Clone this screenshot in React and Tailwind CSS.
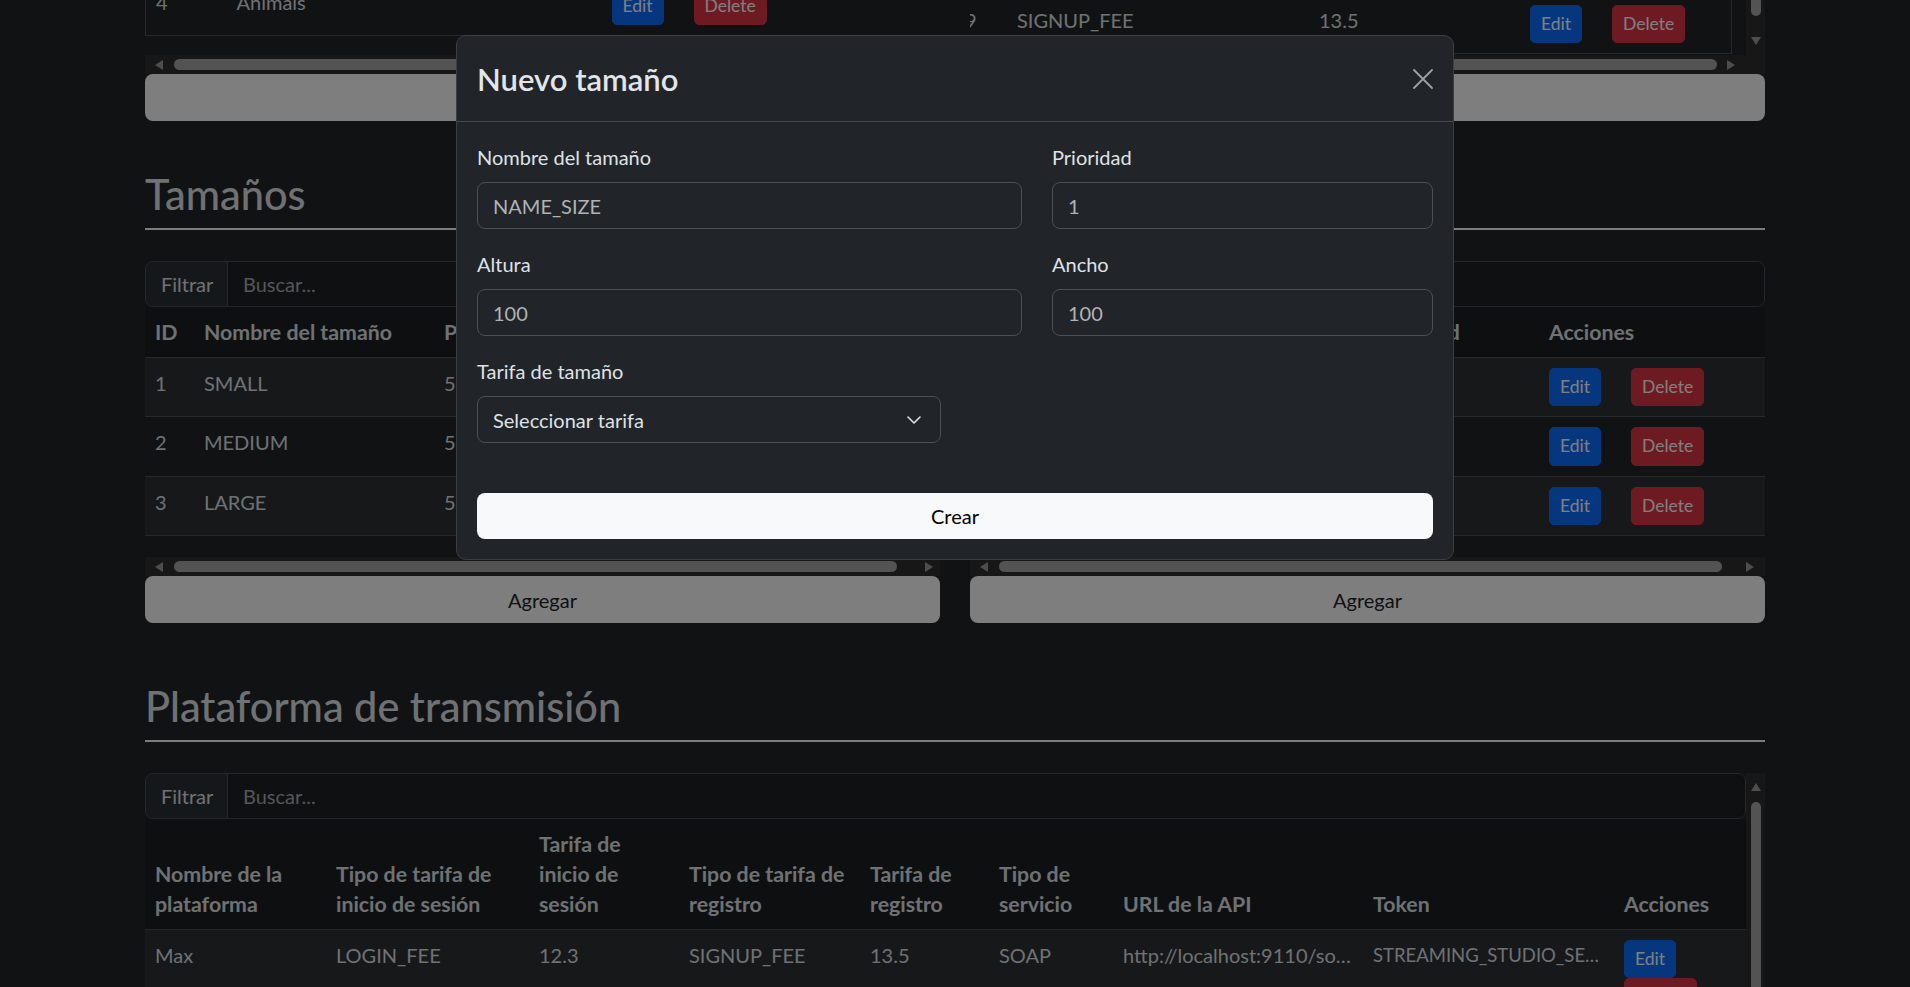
import React from "react";

function Arrow({ dir, className = "" }) {
  const horiz = dir === "left" || dir === "right";
  const pts = {
    left: "8,0 8,10 0,5",
    right: "0,0 8,5 0,10",
    up: "0,8 10,8 5,0",
    down: "0,0 10,0 5,8",
  }[dir];
  return (
    <svg
      width={horiz ? 8 : 10}
      height={horiz ? 10 : 8}
      viewBox={horiz ? "0 0 8 10" : "0 0 10 8"}
      className={`shrink-0 ${className}`}
    >
      <polygon points={pts} fill="#9a9a9a" />
    </svg>
  );
}

function Actions() {
  return (
    <div className="flex flex-wrap">
      <span className="mr-[30px] inline-flex h-[38.25px] items-center rounded-[5px] border border-[#0d6efd] bg-[#0d6efd] px-[10px] text-[17.5px] text-white">
        Edit
      </span>
      <span className="inline-flex h-[38.25px] items-center rounded-[5px] border border-[#dc3545] bg-[#dc3545] px-[10px] text-[17.5px] text-white">
        Delete
      </span>
    </div>
  );
}

function AddButton() {
  return (
    <div className="flex h-[47px] items-center justify-center rounded-[8px] bg-[#fdfdfd] text-[20px] text-[#212529]">
      Agregar
    </div>
  );
}

function FilterBar() {
  return (
    <div className="flex h-[46px] overflow-hidden rounded-[8px] border border-[#495057]">
      <div className="flex w-[82px] items-center border-r border-[#495057] bg-[#2b3035] px-[15px]">Filtrar</div>
      <div className="flex flex-1 items-center bg-[#1e2124] px-[15px] text-[#a9acaf]">Buscar...</div>
    </div>
  );
}

function SectionTitle({ children }) {
  return (
    <h2 className="border-b-2 border-[#f8f9fa] pb-[9px] text-[41.5px] leading-[49px] font-medium">{children}</h2>
  );
}

const th = "px-[10px] py-[10px] text-left align-bottom text-[21.3px] font-bold whitespace-nowrap";
const td = "px-[10px] py-[10px] align-top whitespace-nowrap";

const sizes = [
  { id: 1, name: "SMALL", price: "5.0", prio: 1 },
  { id: 2, name: "MEDIUM", price: "5.5", prio: 2 },
  { id: 3, name: "LARGE", price: "5.8", prio: 3 },
];

const sizeFees = [
  { id: 1, name: "SMALL_FEE", fee: "5.0", prio: 1 },
  { id: 2, name: "MEDIUM_FEE", fee: "5.5", prio: 2 },
  { id: 3, name: "LARGE_FEE", fee: "5.8", prio: 3 },
];

function Field({ label, placeholder }) {
  return (
    <div className="mb-[20px]">
      <label className="mb-[10px] block text-[20px] leading-[30px] text-[#dee2e6]">{label}</label>
      <input
        placeholder={placeholder}
        className="block h-[47px] w-full rounded-[8px] border border-[#495057] bg-[#212529] px-[15px] text-[20px] text-[#dee2e6] outline-none placeholder:text-[#afb3b6]"
      />
    </div>
  );
}

export default function App() {
  return (
    <div className="relative h-screen overflow-hidden bg-[#212529] text-[20px] leading-[30px] text-[#dee2e6] [font-family:Lato,'Liberation_Sans',Arial,sans-serif]">
      <div className="mx-auto w-[1620px]">
        {/* tail of the previous section */}
        <div className="grid grid-cols-2 gap-x-[30px]">
          <div>
            <div className="h-[55px] overflow-hidden">
              <table className="-mt-[23px] w-[795px] table-fixed border-collapse border-l border-[#4d5154]">
                <colgroup>
                  <col className="w-[81px]" />
                  <col className="w-[375px]" />
                  <col className="w-[339px]" />
                </colgroup>
                <tbody>
                  <tr className="border-b border-[#4d5154] bg-[#212529]">
                    <td className={td}>4</td>
                    <td className={td}>Animals</td>
                    <td className={td}><Actions /></td>
                  </tr>
                </tbody>
              </table>
            </div>
            <div className="flex h-[19px] items-center bg-[#2e2e2e]">
              <Arrow dir="left" className="ml-[10px]" />
              <div className="ml-[11px] mr-[28px] h-[11px] flex-1 rounded-full bg-[#a6a6a6]" />
              <Arrow dir="right" className="mr-[7px]" />
            </div>
            <AddButton />
          </div>
          <div>
            <div className="flex h-[55px]">
              <div className="w-[776px] overflow-hidden">
                <table className="-mt-[5px] -ml-[15px] w-[776px] table-fixed border-collapse border-r border-[#4d5154]">
                  <colgroup>
                    <col className="w-[52px]" />
                    <col className="w-[302px]" />
                    <col className="w-[211px]" />
                    <col className="w-[211px]" />
                  </colgroup>
                  <tbody>
                    <tr className="border-b border-[#4d5154] bg-[#212529]">
                      <td className={td}>9</td>
                      <td className={td}>SIGNUP_FEE</td>
                      <td className={td}>13.5</td>
                      <td className={td}><Actions /></td>
                    </tr>
                  </tbody>
                </table>
              </div>
              <div className="flex w-[19px] flex-col items-center bg-[#2e2e2e]">
                <div className="h-[16px] w-[10px] rounded-b-full bg-[#a6a6a6]" />
                <Arrow dir="down" className="mt-[21px]" />
              </div>
            </div>
            <div className="flex h-[19px] items-center bg-[#2e2e2e]">
              <Arrow dir="left" className="ml-[10px]" />
              <div className="ml-[11px] mr-[10px] h-[11px] flex-1 rounded-full bg-[#a6a6a6]" />
              <Arrow dir="right" className="mr-[30px]" />
            </div>
            <AddButton />
          </div>
        </div>

        {/* Tamaños */}
        <div className="mt-[49px] grid grid-cols-2 gap-x-[30px]">
          <div>
            <SectionTitle>Tamaños</SectionTitle>
            <div className="mt-[31px] h-[296px] overflow-hidden">
              <FilterBar />
              <table className="w-[795px] table-fixed border-collapse">
                <colgroup>
                  <col className="w-[49px]" />
                  <col className="w-[240px]" />
                  <col className="w-[140px]" />
                  <col className="w-[130px]" />
                  <col className="w-[236px]" />
                </colgroup>
                <thead className="bg-[#1c1f23]">
                  <tr className="border-b border-[#4d5154]">
                    <th className={th}>ID</th>
                    <th className={th}>Nombre del tamaño</th>
                    <th className={th}>Precio</th>
                    <th className={th}>Prioridad</th>
                    <th className={th}>Acciones</th>
                  </tr>
                </thead>
                <tbody>
                  {sizes.map((s, i) => (
                    <tr key={s.id} className={`border-b border-[#4d5154] ${i % 2 === 0 ? "bg-[#2c3034]" : "bg-[#212529]"}`}>
                      <td className={td}>{s.id}</td>
                      <td className={td}>{s.name}</td>
                      <td className={td}>{s.price}</td>
                      <td className={td}>{s.prio}</td>
                      <td className={td}><Actions /></td>
                    </tr>
                  ))}
                </tbody>
              </table>
            </div>
            <div className="flex h-[19px] items-center bg-[#2e2e2e]">
              <Arrow dir="left" className="ml-[10px]" />
              <div className="ml-[11px] mr-[28px] h-[11px] flex-1 rounded-full bg-[#a6a6a6]" />
              <Arrow dir="right" className="mr-[7px]" />
            </div>
            <AddButton />
          </div>
          <div>
            <SectionTitle>Tarifas de tamaño</SectionTitle>
            <div className="mt-[31px] h-[296px] overflow-hidden">
              <FilterBar />
              <table className="w-[795px] table-fixed border-collapse">
                <colgroup>
                  <col className="w-[50px]" />
                  <col className="w-[180px]" />
                  <col className="w-[163px]" />
                  <col className="w-[176px]" />
                  <col className="w-[226px]" />
                </colgroup>
                <thead className="bg-[#1c1f23]">
                  <tr className="border-b border-[#4d5154]">
                    <th className={th}>ID</th>
                    <th className={th}>Nombre</th>
                    <th className={th}>Tarifa</th>
                    <th className={th}>Prioridad</th>
                    <th className={th}>Acciones</th>
                  </tr>
                </thead>
                <tbody>
                  {sizeFees.map((s, i) => (
                    <tr key={s.id} className={`border-b border-[#4d5154] ${i % 2 === 0 ? "bg-[#2c3034]" : "bg-[#212529]"}`}>
                      <td className={td}>{s.id}</td>
                      <td className={td}>{s.name}</td>
                      <td className={td}>{s.fee}</td>
                      <td className={td}>{s.prio}</td>
                      <td className={td}><Actions /></td>
                    </tr>
                  ))}
                </tbody>
              </table>
            </div>
            <div className="flex h-[19px] items-center bg-[#2e2e2e]">
              <Arrow dir="left" className="ml-[10px]" />
              <div className="ml-[11px] mr-[24px] h-[11px] flex-1 rounded-full bg-[#a6a6a6]" />
              <Arrow dir="right" className="mr-[11px]" />
            </div>
            <AddButton />
          </div>
        </div>

        {/* Plataforma de transmisión */}
        <div className="mt-[59px]">
          <SectionTitle>Plataforma de transmisión</SectionTitle>
          <div className="mt-[31px] flex h-[400px]">
            <div className="flex-1 overflow-hidden">
              <FilterBar />
              <table className="w-[1601px] table-fixed border-collapse">
                <colgroup>
                  <col className="w-[181px]" />
                  <col className="w-[203px]" />
                  <col className="w-[150px]" />
                  <col className="w-[181px]" />
                  <col className="w-[129px]" />
                  <col className="w-[124px]" />
                  <col className="w-[250px]" />
                  <col className="w-[251px]" />
                  <col className="w-[132px]" />
                </colgroup>
                <thead className="bg-[#1c1f23]">
                  <tr className="border-b border-[#4d5154]">
                    <th className={th}>Nombre de la<br />plataforma</th>
                    <th className={th}>Tipo de tarifa de<br />inicio de sesión</th>
                    <th className={th}>Tarifa de<br />inicio de<br />sesión</th>
                    <th className={th}>Tipo de tarifa de<br />registro</th>
                    <th className={th}>Tarifa de<br />registro</th>
                    <th className={th}>Tipo de<br />servicio</th>
                    <th className={th}>URL de la API</th>
                    <th className={th}>Token</th>
                    <th className={th}>Acciones</th>
                  </tr>
                </thead>
                <tbody>
                  <tr className="border-b border-[#4d5154] bg-[#2c3034]">
                    <td className={td}>Max</td>
                    <td className={td}>LOGIN_FEE</td>
                    <td className={td}>12.3</td>
                    <td className={td}>SIGNUP_FEE</td>
                    <td className={td}>13.5</td>
                    <td className={td}>SOAP</td>
                    <td className={`${td} truncate`}>http://localhost:9110/so…</td>
                    <td className={`${td} overflow-hidden text-[18.5px]`}>STREAMING_STUDIO_SE…</td>
                    <td className={td}><Actions /></td>
                  </tr>
                </tbody>
              </table>
            </div>
            <div className="flex w-[19px] flex-col items-center bg-[#2e2e2e] pt-[10px]">
              <Arrow dir="up" />
              <div className="mt-[11px] h-[400px] w-[10px] rounded-full bg-[#a6a6a6]" />
            </div>
          </div>
        </div>
      </div>

      {/* backdrop */}
      <div className="fixed inset-0 bg-black/50" />

      {/* modal */}
      <div className="fixed inset-0 flex justify-center pt-[35px]">
        <div className="h-fit w-[998px] rounded-[10px] border border-[#3b3e42] bg-[#212529]">
          <div className="flex h-[86px] items-center justify-between border-b border-[#45494e] px-[20px]">
            <h5 className="text-[31px] leading-[36px] font-semibold text-[#e3e6e9]">Nuevo tamaño</h5>
            <button type="button" className="flex h-[20px] w-[20px] items-center justify-center" aria-label="Cerrar">
              <svg width="20" height="20" viewBox="0 0 20 20">
                <path d="M1 1 L19 19 M19 1 L1 19" stroke="#9ea1a4" strokeWidth="1.8" strokeLinecap="round" />
              </svg>
            </button>
          </div>
          <div className="p-[20px]">
            <div className="grid grid-cols-[545px_381px] gap-x-[30px]">
              <Field label="Nombre del tamaño" placeholder="NAME_SIZE" />
              <Field label="Prioridad" placeholder="1" />
              <Field label="Altura" placeholder="100" />
              <Field label="Ancho" placeholder="100" />
            </div>
            <div className="w-[464px]">
              <label className="mb-[10px] block text-[20px] leading-[30px] text-[#dee2e6]">Tarifa de tamaño</label>
              <div className="flex h-[47px] items-center justify-between rounded-[8px] border border-[#495057] bg-[#212529] pl-[15px] pr-[19px] text-[20px] text-[#dee2e6]">
                <span>Seleccionar tarifa</span>
                <svg width="14" height="8" viewBox="0 0 14 8">
                  <polyline points="1,1 7,7 13,1" fill="none" stroke="#dee2e6" strokeWidth="1.6" strokeLinecap="round" strokeLinejoin="round" />
                </svg>
              </div>
            </div>
            <button type="button" className="mt-[50px] block h-[46px] w-full rounded-[8px] bg-[#f8f9fa] text-[20px] text-black">
              Crear
            </button>
          </div>
        </div>
      </div>
    </div>
  );
}
